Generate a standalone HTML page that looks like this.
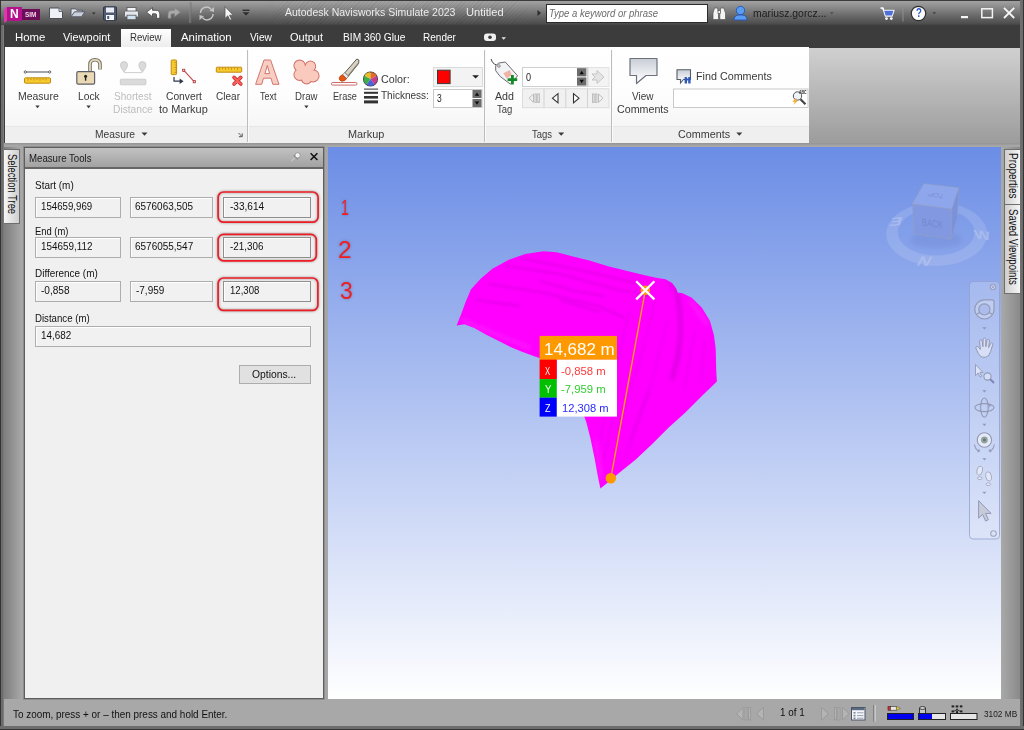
<!DOCTYPE html>
<html lang="en">
<head>
<meta charset="utf-8">
<title>Autodesk Navisworks Simulate 2023 - Untitled</title>
<style>
*{box-sizing:border-box;margin:0;padding:0}
html,body{width:1024px;height:730px;overflow:hidden}
body{position:relative;background:#a6a6a6;font-family:"Liberation Sans","DejaVu Sans",sans-serif;font-size:11px;color:#222}
.abs{position:absolute}
svg{position:absolute;overflow:visible}
.t{position:absolute;white-space:nowrap;transform-origin:0 0;display:block}
/* window frame */
#frameL{left:0;top:25px;width:4px;height:705px;background:linear-gradient(90deg,#343434 0,#343434 1px,#6c6c6c 1px,#6c6c6c 3px,#8a8a8a 4px)}
#frameT{left:0;top:0;width:1px;height:25px;background:#343434}
#frameR{left:1020px;top:0;width:4px;height:730px;background:linear-gradient(90deg,#707070 0,#6c6c6c 2.600px,#343434 2.600px,#343434 100%)}
#frameB{left:0;top:726px;width:1024px;height:4px;background:linear-gradient(180deg,#6e6e6e 0,#6c6c6c 2.600px,#343434 2.600px,#343434 100%)}
/* title bar */
#title{left:0;top:0;width:1024px;height:25px;background:linear-gradient(180deg,#3c3c3c 0,#3c3c3c 1px,#a2a2a2 1px,#8c8c8c 7px,#6c6c6c 15px,#505050 23px,#444 25px)}
#hatch{left:258px;top:1px;width:284px;height:23px;background:repeating-linear-gradient(135deg,rgba(0,0,0,.045) 0,rgba(0,0,0,.045) 1px,rgba(255,255,255,.02) 1px,rgba(255,255,255,.02) 3px);-webkit-mask-image:linear-gradient(90deg,transparent,#000 12%,#000 88%,transparent);mask-image:linear-gradient(90deg,transparent,#000 12%,#000 88%,transparent)}
#tabs{left:4px;top:25px;width:1016px;height:23px;background:#3c3c3c}
#tabsel{left:121px;top:29px;width:50px;height:19px;background:linear-gradient(180deg,#fdfdfd,#ececec);border-top:1px solid #fff}
/* ribbon */
#ribbon{left:5px;top:47px;width:804px;height:79px;background:linear-gradient(180deg,#ffffff 0,#fdfdfd 60%,#f6f6f6 100%)}
#ribbonL{left:5px;top:126px;width:804px;height:17px;background:#efefef;border-top:1px solid #e6e6e6}
#ribbonR{left:809px;top:48px;width:211px;height:95px;background:linear-gradient(180deg,#d0d0d0,#9c9c9c)}
#ribbonE{left:4px;top:47px;width:1px;height:96px;background:#3c3c3c}
#ribbonU{left:5px;top:143px;width:1015px;height:2px;background:linear-gradient(180deg,#949494,#a0a0a0)}
.sep{position:absolute;top:50px;width:2px;height:92px;background:linear-gradient(90deg,#bdbdbd 0,#bdbdbd 1px,#fafafa 1px)}
.dd{position:absolute;width:0;height:0;border-left:2px solid transparent;border-right:2px solid transparent;border-top:2.5px solid #444}
.ddp{position:absolute;width:0;height:0;border-left:3px solid transparent;border-right:3px solid transparent;border-top:3.5px solid #444}
/* docking */
#dockL{left:4px;top:147px;width:18px;height:552px;background:linear-gradient(90deg,#7e7e7e,#a9a9a9)}
#dockR{left:1001px;top:147px;width:19px;height:552px;background:linear-gradient(90deg,#a9a9a9,#8a8a8a)}
.vtab{position:absolute;border:1px solid #6e6e6e;background:linear-gradient(90deg,#f6f6f6,#cfcfcf)}
.vtxt{position:absolute;white-space:nowrap;transform-origin:0 0;transform:rotate(90deg);font-size:11px;line-height:12px;color:#111}
/* measure tools panel */
#mt{left:24px;top:147px;width:300px;height:552px;background:#f0f0f0;border:1px solid #5e5e5e;box-shadow:0 0 0 1px #8e8e8e}
#mtTitle{left:0;top:0;width:298px;height:21px;background:linear-gradient(180deg,#c2c2c2,#a2a2a2);border-bottom:2px solid #666}
.fld{position:absolute;border:1px solid #adadad;background:#f1f1f1;box-shadow:inset 1px 1px 0 #fff}
.hl{position:absolute;border:2px solid #f01820;border-radius:6px;box-shadow:0 0 3px 1px rgba(90,90,90,.55),inset 0 0 3px 1px rgba(90,90,90,.45)}
.btn{position:absolute;border:1px solid #adadad;background:#e1e1e1}
/* viewport */
#view{left:328px;top:147px;width:673px;height:552px;overflow:hidden;background:linear-gradient(180deg,#6b8de5 0%,#ffffff 100%)}
#status{left:4px;top:699px;width:1016px;height:27px;background:#a8a8a8}
</style>
</head>
<body>
<div id="title" class="abs"></div>
<div id="hatch" class="abs"></div>
<div id="tabs" class="abs"></div>
<div id="tabsel" class="abs"></div>
<div id="ribbon" class="abs"></div>
<div id="ribbonL" class="abs"></div>
<div id="ribbonR" class="abs"></div>
<div id="ribbonU" class="abs"></div>
<div id="ribbonE" class="abs"></div>
<div id="dockL" class="abs"></div>
<div id="dockR" class="abs"></div>
<div id="status" class="abs"></div>
<!-- ===== title bar ===== -->
<svg style="left:0;top:0" width="1024" height="48" viewBox="0 0 1024 48">
  <!-- app logo -->
  <polygon points="4,9 7,7 7,21 4,23" fill="#d63ba8"/>
  <rect x="7" y="7" width="15" height="14" fill="#b3128c"/>
  <rect x="22" y="9" width="18" height="11" fill="#6d0c58"/>
  <!-- new -->
  <path d="M49.5 8 H59 L62.5 11.5 V18.5 H49.5 Z" fill="#eef1f6" stroke="#4b4f58" stroke-width="1"/>
  <path d="M59 8 V11.5 H62.5" fill="#cfd5e0" stroke="#4b4f58" stroke-width=".8"/>
  <!-- open -->
  <path d="M71 16.8 V8.8 H75.5 L76.8 10.2 H82.5 V12" fill="#dfe4ec" stroke="#555b66" stroke-width="1"/>
  <path d="M71 16.8 L74.5 11.8 H85 L81.5 16.8 Z" fill="#c9d0dc" stroke="#555b66" stroke-width="1"/>
  <polygon points="92,12.5 95.6,12.5 93.8,14.6" fill="#2e2e2e"/>
  <!-- save -->
  <rect x="103.5" y="6.8" width="13" height="13.4" rx="1" fill="#4d5a72" stroke="#2e3646" stroke-width="1"/>
  <rect x="106" y="7.5" width="8" height="5" fill="#e9edf3"/>
  <rect x="106" y="15" width="8" height="5" fill="#f4f6fa"/>
  <rect x="107.2" y="16" width="2" height="3" fill="#4d5a72"/>
  <!-- print -->
  <rect x="127" y="7.5" width="9" height="4" fill="#f4f6fa" stroke="#555" stroke-width=".8"/>
  <rect x="124.5" y="11" width="14" height="6" rx="1" fill="#e4e8ee" stroke="#555" stroke-width=".8"/>
  <rect x="127" y="15.2" width="9" height="4.5" fill="#cfe0ee" stroke="#555" stroke-width=".8"/>
  <!-- undo -->
  <path d="M146.5 12.2 L152.5 7.5 V10.3 H156 Q159.8 10.3 159.8 14.5 V18.3 H156.5 V14.8 Q156.5 13.8 155.4 13.8 H152.5 V16.8 Z" fill="#fafafa" stroke="#444" stroke-width=".8"/>
  <!-- redo (disabled) -->
  <path d="M180.5 12.2 L174.5 7.5 V10.3 H171.5 Q168 10.3 168 14.5 V18.3 H171 V14.8 Q171 13.8 172.1 13.8 H174.5 V16.8 Z" fill="#a9a9a9" stroke="#7c7c7c" stroke-width=".6"/>
  <rect x="189.5" y="2" width="1" height="21" fill="#8a8a8a"/>
  <rect x="190.5" y="2" width="1" height="21" fill="#6a6a6a" opacity=".6"/>
  <!-- refresh -->
  <path d="M200.5 13 A6 6 0 0 1 211 9.2" fill="none" stroke="#c4c4c4" stroke-width="1.500"/>
  <path d="M213 14 A6 6 0 0 1 202.5 17.8" fill="none" stroke="#c4c4c4" stroke-width="1.500"/>
  <polygon points="209.500,10.800 214,7 214,12" fill="#c4c4c4"/>
  <polygon points="204,16.200 199.500,20 199.500,15" fill="#c4c4c4"/>
  <!-- select cursor -->
  <path d="M225 6.5 V18.5 L227.8 15.8 L229.8 20.3 L231.6 19.5 L229.6 15.2 H233.3 Z" fill="#f4f4f4" stroke="#555" stroke-width=".8"/>
  <!-- customize -->
  <rect x="242.5" y="9.6" width="7" height="1.3" fill="#2d2d2d"/>
  <polygon points="242.5,12.2 249.5,12.2 246,15.6" fill="#2d2d2d"/>
  <!-- search arrow + box -->
  <polygon points="537.5,10 541,13 537.5,16" fill="#2d2d2d"/>
  <rect x="546.5" y="4.5" width="161" height="18" fill="#fff" stroke="#2b2b2b" stroke-width="1"/>
  <!-- binoculars -->
  <g fill="#f4f4f4" stroke="#555" stroke-width=".7">
    <path d="M713 19.5 V13 L714.5 8 H717.5 L718.5 12 V19.5 Z"/>
    <path d="M719.8 19.5 V12 L720.8 8 H723.8 L725.5 13 V19.5 Z"/>
    <rect x="718" y="10.5" width="2.5" height="3"/>
  </g>
  <!-- user -->
  <circle cx="740.5" cy="10.5" r="4.2" fill="#5b9bf0" stroke="#1f56b8" stroke-width=".9"/>
  <path d="M734 20 Q734 15.5 738.5 15 H742.5 Q747 15.5 747 20 Z" fill="#5b9bf0" stroke="#1f56b8" stroke-width=".9"/>
  <polygon points="830,12.2 833.6,12.2 831.8,14.2" fill="#4a4a4a"/>
  <!-- cart -->
  <path d="M880.5 8 H883 L885.5 16 H892 L893.8 10.5 H884" fill="#e8eefc" stroke="#f8f8ff" stroke-width="1.5" stroke-linejoin="round"/>
  <path d="M884.2 10.8 H893.4 L892 15.5 H885.6 Z" fill="#4f6fd8"/>
  <circle cx="886.5" cy="18.6" r="1.4" fill="#f8f8ff"/><circle cx="891.3" cy="18.6" r="1.4" fill="#f8f8ff"/>
  <rect x="902.5" y="6.5" width="1" height="15" fill="#8e8e8e"/>
  <!-- help -->
  <circle cx="918.5" cy="13.5" r="7.2" fill="#fbfbfb" stroke="#2d2d2d" stroke-width="1.2"/>
  <polygon points="932.6,12.2 936,12.2 934.3,14.2" fill="#3c3c3c"/>
  <!-- window controls -->
  <rect x="961" y="16" width="7" height="2.2" fill="#f4f4f4"/>
  <rect x="981.8" y="8.8" width="10.6" height="8.8" fill="none" stroke="#f4f4f4" stroke-width="1.5"/>
  <path d="M1004 7.8 L1014.2 18 M1014.2 7.8 L1004 18" stroke="#f6f6f6" stroke-width="1.8"/>
  <!-- tab row camera icon -->
  <rect x="484" y="33.5" width="12" height="7.5" rx="3" fill="#f0f0f0"/>
  <circle cx="490" cy="37.3" r="1.8" fill="#3c3c3c"/>
  <polygon points="501.5,37.3 506,37.3 503.7,39.8" fill="#e8e8e8"/>
</svg>
<span class="t" style="left:10.00px;top:6.30px;font-size:12.71px;line-height:16px;transform:scaleX(0.9444);color:#fff;font-weight:bold">N</span>
<span class="t" style="left:25.00px;top:10.50px;font-size:6.57px;line-height:8px;transform:scaleX(0.9754);color:#f3d6ea;font-weight:bold">SIM</span>
<span class="t" style="left:284.50px;top:4.85px;font-size:11.59px;line-height:14px;transform:scaleX(0.9068);color:#ececec">Autodesk Navisworks Simulate 2023</span>
<span class="t" style="left:465.75px;top:4.85px;font-size:11.59px;line-height:14px;transform:scaleX(0.9596);color:#ececec">Untitled</span>
<span class="t" style="left:549.00px;top:5.60px;font-size:10.87px;line-height:14px;transform:scaleX(0.8741);color:#6a6a6a;font-style:italic">Type a keyword or phrase</span>
<span class="t" style="left:753.00px;top:5.80px;font-size:10.93px;line-height:14px;transform:scaleX(0.9527);color:#1c1c1c">mariusz.gorcz...</span>
<span class="t" style="left:915.80px;top:6.10px;font-size:12.00px;line-height:15px;transform:scaleX(0.8000);color:#2a55d0;font-weight:bold">?</span>
<!-- tabs -->
<span class="t" style="left:15.25px;top:30.40px;font-size:11.59px;line-height:14px;transform:scaleX(0.9854);color:#fff">Home</span>
<span class="t" style="left:62.90px;top:30.40px;font-size:11.59px;line-height:14px;transform:scaleX(0.9473);color:#fff">Viewpoint</span>
<span class="t" style="left:129.90px;top:30.40px;font-size:11.59px;line-height:14px;transform:scaleX(0.8316);color:#333">Review</span>
<span class="t" style="left:180.50px;top:30.40px;font-size:11.59px;line-height:14px;transform:scaleX(0.9844);color:#fff">Animation</span>
<span class="t" style="left:249.50px;top:30.40px;font-size:11.59px;line-height:14px;transform:scaleX(0.8815);color:#fff">View</span>
<span class="t" style="left:290.00px;top:30.40px;font-size:11.59px;line-height:14px;transform:scaleX(0.9496);color:#fff">Output</span>
<span class="t" style="left:342.50px;top:30.40px;font-size:11.59px;line-height:14px;transform:scaleX(0.8813);color:#fff">BIM 360 Glue</span>
<span class="t" style="left:422.50px;top:30.40px;font-size:11.59px;line-height:14px;transform:scaleX(0.8657);color:#fff">Render</span>
<!-- ===== ribbon ===== -->
<div class="sep" style="left:247px"></div>
<div class="sep" style="left:484px"></div>
<div class="sep" style="left:611px"></div>
<svg style="left:0;top:0" width="1024" height="146" viewBox="0 0 1024 146">
  <defs><linearGradient id="gBub" x1="0" y1="0" x2="0" y2="1"><stop offset="0" stop-color="#c9ced6"/><stop offset=".75" stop-color="#f4f5f8"/><stop offset="1" stop-color="#ffffff"/></linearGradient></defs>
  <!-- Measure icon -->
  <line x1="25.5" y1="72" x2="49.5" y2="72" stroke="#4a4f57" stroke-width="1"/>
  <circle cx="25.300" cy="72" r="1.150" fill="#fff" stroke="#3f444c" stroke-width=".8"/>
  <circle cx="49.700" cy="72" r="1.150" fill="#fff" stroke="#3f444c" stroke-width=".8"/>
  <rect x="24.5" y="77.8" width="26" height="5.4" rx="1" fill="#f6c92e" stroke="#c08a12" stroke-width="1"/>
  <path d="M28 78.5v2 M31 78.5v1.5 M34 78.5v2 M37 78.5v1.5 M40 78.5v2 M43 78.5v1.5 M46 78.5v2" stroke="#b07c10" stroke-width=".7"/>
  <!-- Lock icon -->
  <path d="M90 71.5 V64.5 Q90 59.8 95 59.8 Q100 59.8 100 64.5 V69.5" fill="none" stroke="#6d6f72" stroke-width="3.6"/>
  <path d="M90 71.5 V64.5 Q90 59.8 95 59.8 Q100 59.8 100 64.5 V69.5" fill="none" stroke="#e9d7ae" stroke-width="1.8"/>
  <rect x="76.8" y="71.6" width="17.8" height="12.6" rx="1.4" fill="#ead9b4" stroke="#5d6066" stroke-width="1.2"/>
  <circle cx="85.6" cy="76.3" r="1.5" fill="#222"/><rect x="84.9" y="76.5" width="1.4" height="4.2" fill="#222"/>
  <!-- Shortest distance (disabled) -->
  <g fill="#dadada" stroke="#c6c6c6" stroke-width=".8">
    <path d="M124 61.5 a3.6 3.6 0 0 1 3.6 3.6 q0 2.5 -3.6 7 q-3.6 -4.5 -3.6 -7 a3.6 3.6 0 0 1 3.6 -3.6z"/>
    <path d="M142.4 61.5 a3.6 3.6 0 0 1 3.6 3.6 q0 2.5 -3.6 7 q-3.6 -4.5 -3.6 -7 a3.6 3.6 0 0 1 3.6 -3.6z"/>
    <rect x="120.3" y="79.2" width="25.6" height="5.6" rx=".8"/>
  </g>
  <line x1="124" y1="72.6" x2="142.4" y2="72.6" stroke="#cfcfcf" stroke-width="1"/>
  <!-- Convert to markup -->
  <rect x="171.2" y="60" width="5.4" height="14.6" rx=".8" fill="#f6c92e" stroke="#c08a12" stroke-width="1"/>
  <path d="M174.4 62.5h2 M175 65h1.4 M174.4 67.5h2 M175 70h1.4 M174.4 72.4h2" stroke="#b07c10" stroke-width=".7"/>
  <path d="M174 77 V81.2 H180.5" fill="none" stroke="#2e3a4a" stroke-width="1.2"/>
  <polygon points="179.6,78.4 183.6,81.2 179.6,84" fill="#2e3a4a"/>
  <line x1="183.6" y1="70.2" x2="194.2" y2="81.6" stroke="#c0474a" stroke-width="1.1"/>
  <rect x="182.600" y="69.200" width="2.200" height="2.200" fill="#f2b8b8" stroke="#b03a3e" stroke-width=".8"/>
  <rect x="193.200" y="80.600" width="2.200" height="2.200" fill="#f2b8b8" stroke="#b03a3e" stroke-width=".8"/>
  <!-- Clear -->
  <rect x="216.3" y="67.2" width="25.4" height="5" rx=".8" fill="#f6c92e" stroke="#c08a12" stroke-width="1"/>
  <path d="M219.5 67.8v2 M222.5 67.8v1.5 M225.5 67.8v2 M228.5 67.8v1.5 M231.5 67.8v2 M234.5 67.8v1.5 M237.5 67.8v2" stroke="#b07c10" stroke-width=".7"/>
  <path d="M234 77.4 L240.8 84 M240.8 77.4 L234 84" stroke="#cf3030" stroke-width="3.600" stroke-linecap="round"/>
  <path d="M234 77.4 L240.8 84 M240.8 77.4 L234 84" stroke="#f8625c" stroke-width="1.900" stroke-linecap="round"/>
  <!-- Text A -->
  <path d="M255.600 84.300 L264 60 H270.600 L279 84.300 H272.800 L271 78.200 H263.500 L261.700 84.300 Z M264.900 73.600 H269.600 L267.300 65.500 Z" fill="#f8cdc3" stroke="#d0766c" stroke-width="1" stroke-linejoin="round" fill-rule="evenodd"/>
  <!-- Draw cloud -->
  <g fill="#f9cabd" stroke="#cf6f66" stroke-width="2"><circle cx="299.600" cy="65.600" r="5.200"/><circle cx="310.400" cy="66.300" r="4.800"/><circle cx="313" cy="75.800" r="5.600"/><circle cx="306.600" cy="78.600" r="4.800"/><circle cx="299.700" cy="74.600" r="5.300"/></g>
  <g fill="#f9cabd"><circle cx="299.600" cy="65.600" r="5.200"/><circle cx="310.400" cy="66.300" r="4.800"/><circle cx="313" cy="75.800" r="5.600"/><circle cx="306.600" cy="78.600" r="4.800"/><circle cx="299.700" cy="74.600" r="5.300"/><circle cx="305.500" cy="71" r="5"/></g>
  <!-- Erase brush -->
  <path d="M344.800 72.800 L356.800 59 L358.900 60 L358.600 63.500 L348.400 76.200 Z" fill="#d8d2c4" stroke="#4e493f" stroke-width=".9" stroke-linejoin="round"/>
  <path d="M347.600 75.400 L358.600 62 L358.600 63.500 L348.400 76.200 Z" fill="#8a8272"/>
  <path d="M342.400 74.800 L344.800 72.600 L348.500 76.200 L346.500 78.600 Z" fill="#e6e6e6" stroke="#6a6a6a" stroke-width=".7"/>
  <path d="M342.300 74.800 L346.600 78.700 Q344.500 81.600 341.500 81.200 Q338.600 80.200 339.300 77.600 Q340.300 75.600 342.300 74.800 Z" fill="#e9550c" stroke="#a63a08" stroke-width=".7"/>
  <rect x="331.400" y="82.500" width="25.600" height="2.600" rx="1.300" fill="#fff" stroke="#c85a5a" stroke-width=".9"/>
  <!-- color wheel -->
  <circle cx="370.5" cy="79" r="6.800" fill="#e8e8e8" stroke="#3c3c3c" stroke-width="1.500"/>
  <path d="M370.500 79 L364.500 76 A6.200 6.200 0 0 1 370.500 72.300 Z" fill="#e5c02a"/>
  <path d="M370.500 79 L370.500 72.300 A6.200 6.200 0 0 1 376.500 76 Z" fill="#e36a2a"/>
  <path d="M370.500 79 L376.500 76 A6.200 6.200 0 0 1 374.500 84.400 Z" fill="#c63b8e"/>
  <path d="M370.500 79 L374.500 84.400 A6.200 6.200 0 0 1 366.500 84.400 Z" fill="#4a62d8"/>
  <path d="M370.500 79 L366.500 84.400 A6.200 6.200 0 0 1 364.500 76 Z" fill="#3fae4a"/>
  <!-- thickness lines -->
  <rect x="364" y="88.600" width="14" height="1" fill="#333"/>
  <rect x="364" y="91.800" width="14" height="2" fill="#333"/>
  <rect x="364" y="96" width="14" height="2.600" fill="#333"/>
  <rect x="364" y="100.400" width="14" height="3" fill="#333"/>
  <!-- colour dropdown -->
  <rect x="433.500" y="67.500" width="49" height="19" fill="#f3f3f3" stroke="#dadada" stroke-width="1"/>
  <rect x="437.500" y="70.200" width="12.600" height="13.400" fill="#ff0000" stroke="#3a3a3a" stroke-width="1"/>
  <polygon points="472.200,75.200 479,75.200 475.600,78.600" fill="#222"/>
  <!-- thickness spinner -->
  <rect x="433.500" y="89.500" width="48.500" height="18" fill="#fff" stroke="#c9c9c9" stroke-width="1"/>
  <rect x="472.500" y="90" width="9" height="8" fill="#6c6c6c"/><rect x="472.500" y="99" width="9" height="8" fill="#6c6c6c"/>
  <polygon points="474.800,95.800 479.200,95.800 477,92.400" fill="#0a0a0a"/>
  <polygon points="474.800,101.400 479.200,101.400 477,104.800" fill="#0a0a0a"/>
  <!-- Add tag -->
  <path d="M491.200 59 q0.800 4.500 5.600 6.200" fill="none" stroke="#444" stroke-width="1"/>
  <path d="M495.700 65.600 L498.900 63 L505.300 62 L517.600 75.800 L510.500 84.200 L500.200 76.500 L495.700 70.700 Z" fill="#f2f3f5" stroke="#6a6d72" stroke-width="1" stroke-linejoin="round"/>
  <path d="M503.400 73.300 L509.800 70 L511.800 75.200 L506.600 78.400 Z" fill="#f2b3a6"/>
  <circle cx="498.900" cy="66" r="1.300" fill="#fff" stroke="#555" stroke-width=".7"/>
  <path d="M512.400 74.900 V84.500 M507.600 79.700 H517.200" stroke="#128a25" stroke-width="2.800"/>
  <!-- tag id spinner -->
  <rect x="522.500" y="67.500" width="65" height="19" fill="#fff" stroke="#cfcfcf" stroke-width="1"/>
  <rect x="577" y="68.200" width="9.400" height="8.200" fill="#6c6c6c"/><rect x="577" y="77.400" width="9.400" height="8.200" fill="#6c6c6c"/>
  <polygon points="579.500,74.200 583.900,74.200 581.700,70.800" fill="#0a0a0a"/>
  <polygon points="579.500,79.800 583.900,79.800 581.700,83.200" fill="#0a0a0a"/>
  <rect x="588.500" y="67.500" width="20.500" height="19" fill="#f3f3f3" stroke="#e2e2e2" stroke-width="1"/>
  <path d="M592 74 h5 v-3.500 l7 6.500 l-7 6.500 v-3.500 h-5 l3 -3 z" fill="#e4e4e4" stroke="#bdbdbd" stroke-width=".8"/>
  <!-- tag nav buttons -->
  <rect x="522.500" y="88.700" width="86.500" height="19" fill="#f1f1f1" stroke="#dcdcdc" stroke-width="1"/>
  <path d="M544 88.700 v19 M565.800 88.700 v19 M587.500 88.700 v19" stroke="#d2d2d2" stroke-width="1"/>
  <g fill="none" stroke="#bdbdbd" stroke-width="1"><path d="M533.500 94 L529 98.200 L533.500 102.400 Z"/><rect x="535" y="94" width="1.600" height="8.400"/><rect x="537.800" y="94" width="1.600" height="8.400"/></g>
  <path d="M558 93.600 L552.500 98.200 L558 102.800 Z" fill="#fff" stroke="#333" stroke-width="1.100"/>
  <path d="M573.500 93.600 L579 98.200 L573.500 102.800 Z" fill="#fff" stroke="#333" stroke-width="1.100"/>
  <g fill="none" stroke="#bdbdbd" stroke-width="1"><path d="M598.500 94 L603 98.200 L598.500 102.400 Z"/><rect x="592.500" y="94" width="1.600" height="8.400"/><rect x="595.300" y="94" width="1.600" height="8.400"/></g>
  <!-- View comments bubble -->
  <path d="M630 58.500 H657 V75.500 H646 L636.500 83.500 V75.500 H630 Z" fill="url(#gBub)" stroke="#6c727c" stroke-width="1.200" stroke-linejoin="round"/>
  <!-- Find comments icon -->
  <path d="M677 69.800 H690.500 V79.500 H683.500 L680.500 83 V79.500 H677 Z" fill="url(#gBub)" stroke="#555c68" stroke-width="1.100"/>
  <g fill="#2f59b8"><rect x="684.600" y="77" width="2.400" height="6.500" rx=".6"/><rect x="688.200" y="77" width="2.400" height="6.500" rx=".6"/><rect x="686.400" y="78.500" width="2.400" height="2"/></g>
  <!-- search comments box -->
  <rect x="673.500" y="89" width="134.500" height="18.500" fill="#fff" stroke="#c9c9c9" stroke-width="1"/>
  <circle cx="797.500" cy="96" r="4.200" fill="#eef3fa" stroke="#555" stroke-width="1"/>
  <line x1="800.500" y1="99.200" x2="805.500" y2="104.200" stroke="#444" stroke-width="2.200"/>
  <path d="M795.500 98.500 l-3.200 3.300 h2.600 l-1.600 3.200 l4.400 -4.300 h-2.600 l2 -2.200z" fill="#f1a91a"/>
  <!-- launcher arrow -->
  <path d="M238.500 133 L241.800 136.300 M242.200 133.400 V136.700 H238.900" fill="none" stroke="#555" stroke-width="1"/>
  <!-- dropdown arrows -->
  <g fill="#3a3a3a"><polygon points="35.300,105.500 39.700,105.500 37.500,108.200"/><polygon points="86.400,105.500 90.800,105.500 88.600,108.200"/><polygon points="304.200,105.500 308.600,105.500 306.400,108.200"/>
  <polygon points="141.500,132.500 147.500,132.500 144.500,135.700"/><polygon points="558.200,132.500 564.200,132.500 561.200,135.700"/><polygon points="736.300,132.500 742.300,132.500 739.300,135.700"/></g>
</svg>
<span class="t" style="left:17.50px;top:88.85px;font-size:11.23px;line-height:14px;transform:scaleX(0.9330);color:#3a3a3a">Measure</span>
<span class="t" style="left:78.00px;top:88.85px;font-size:11.23px;line-height:14px;transform:scaleX(0.9133);color:#3a3a3a">Lock</span>
<span class="t" style="left:113.75px;top:88.85px;font-size:11.23px;line-height:14px;transform:scaleX(0.8966);color:#bdbdbd">Shortest</span>
<span class="t" style="left:113.25px;top:101.85px;font-size:10.87px;line-height:14px;transform:scaleX(0.9417);color:#bdbdbd">Distance</span>
<span class="t" style="left:165.75px;top:88.85px;font-size:11.23px;line-height:14px;transform:scaleX(0.9150);color:#3a3a3a">Convert</span>
<span class="t" style="left:159.25px;top:101.85px;font-size:10.87px;line-height:14px;transform:scaleX(1.0105);color:#3a3a3a">to Markup</span>
<span class="t" style="left:215.75px;top:88.85px;font-size:11.23px;line-height:14px;transform:scaleX(0.8957);color:#3a3a3a">Clear</span>
<span class="t" style="left:259.50px;top:88.85px;font-size:11.23px;line-height:14px;transform:scaleX(0.8039);color:#3a3a3a">Text</span>
<span class="t" style="left:295.00px;top:88.85px;font-size:11.23px;line-height:14px;transform:scaleX(0.8587);color:#3a3a3a">Draw</span>
<span class="t" style="left:333.25px;top:88.85px;font-size:11.23px;line-height:14px;transform:scaleX(0.8171);color:#3a3a3a">Erase</span>
<span class="t" style="left:381.00px;top:71.60px;font-size:11.30px;line-height:14px;transform:scaleX(0.9501);color:#3a3a3a">Color:</span>
<span class="t" style="left:381.00px;top:87.85px;font-size:11.38px;line-height:14px;transform:scaleX(0.8809);color:#3a3a3a">Thickness:</span>
<span class="t" style="left:437.30px;top:91.10px;font-size:10.87px;line-height:14px;transform:scaleX(0.7833);color:#222">3</span>
<span class="t" style="left:495.00px;top:88.85px;font-size:11.23px;line-height:14px;transform:scaleX(0.9507);color:#3a3a3a">Add</span>
<span class="t" style="left:496.75px;top:101.85px;font-size:10.87px;line-height:14px;transform:scaleX(0.8730);color:#3a3a3a">Tag</span>
<span class="t" style="left:526.25px;top:69.85px;font-size:10.87px;line-height:14px;transform:scaleX(0.8333);color:#222">0</span>
<span class="t" style="left:632.00px;top:88.85px;font-size:11.23px;line-height:14px;transform:scaleX(0.8896);color:#3a3a3a">View</span>
<span class="t" style="left:617.00px;top:101.85px;font-size:10.87px;line-height:14px;transform:scaleX(0.9846);color:#3a3a3a">Comments</span>
<span class="t" style="left:695.75px;top:68.85px;font-size:11.23px;line-height:14px;transform:scaleX(0.9583);color:#3a3a3a">Find Comments</span>
<span class="t" style="left:798.60px;top:90.10px;font-size:4.57px;line-height:6px;transform:scaleX(0.7743);color:#222;font-weight:bold">ABC</span>
<span class="t" style="left:95.00px;top:127.10px;font-size:10.87px;line-height:14px;transform:scaleX(0.9476);color:#3a3a3a">Measure</span>
<span class="t" style="left:348.00px;top:127.10px;font-size:10.87px;line-height:14px;transform:scaleX(1.0022);color:#3a3a3a">Markup</span>
<span class="t" style="left:532.00px;top:127.10px;font-size:10.87px;line-height:14px;transform:scaleX(0.8721);color:#3a3a3a">Tags</span>
<span class="t" style="left:678.00px;top:127.10px;font-size:10.87px;line-height:14px;transform:scaleX(0.9940);color:#3a3a3a">Comments</span>
<!-- ===== left dock tab ===== -->
<div class="vtab" style="left:4px;top:149px;width:16px;height:75px;border-left:none"></div>
<span class="t" style="left:19.40px;top:154.30px;font-size:12.03px;line-height:15px;transform:rotate(90deg) scaleX(0.7822);color:#111">Selection Tree</span>
<!-- ===== Measure Tools panel ===== -->
<div id="mt" class="abs"><div id="mtTitle" class="abs"></div></div>
<svg style="left:0;top:0" width="330" height="400" viewBox="0 0 330 400">
  <!-- pin -->
  <line x1="291.200" y1="161.300" x2="294.600" y2="157.800" stroke="#d6d6d6" stroke-width="1"/>
  <path d="M293.800 155.200 L297.800 159.200" stroke="#8a8a8a" stroke-width="1.600"/>
  <circle cx="297.600" cy="155.300" r="2.600" fill="#f4f4f4" stroke="#8c8c8c" stroke-width=".8"/>
  <!-- close -->
  <path d="M310.600 153.200 L317.400 160 M317.400 153.200 L310.600 160" stroke="#111" stroke-width="1.500"/>
</svg>
<span class="t" style="left:29.00px;top:151.60px;font-size:10.58px;line-height:13px;transform:scaleX(0.9110);color:#1a1a1a">Measure Tools</span>
<span class="t" style="left:34.80px;top:178.70px;font-size:10.72px;line-height:13px;transform:scaleX(0.9292);color:#111">Start (m)</span>
<span class="t" style="left:34.80px;top:224.20px;font-size:10.87px;line-height:14px;transform:scaleX(0.8658);color:#111">End (m)</span>
<span class="t" style="left:34.60px;top:267.00px;font-size:10.72px;line-height:13px;transform:scaleX(0.9265);color:#111">Difference (m)</span>
<span class="t" style="left:34.60px;top:310.80px;font-size:10.87px;line-height:14px;transform:scaleX(0.8887);color:#111">Distance (m)</span>
<div class="fld" style="left:35px;top:197px;width:86px;height:21px"></div>
<div class="fld" style="left:130px;top:197px;width:83px;height:21px"></div>
<div class="fld" style="left:35px;top:237px;width:86px;height:21px"></div>
<div class="fld" style="left:130px;top:237px;width:83px;height:21px"></div>
<div class="fld" style="left:35px;top:280.500px;width:86px;height:21px"></div>
<div class="fld" style="left:130px;top:280.500px;width:83px;height:21px"></div>
<div class="fld" style="left:35px;top:326px;width:276px;height:21px"></div>
<svg style="left:0;top:0" width="330" height="320" viewBox="0 0 330 320">
  <defs><filter id="fH" x="-10%" y="-20%" width="120%" height="140%"><feGaussianBlur stdDeviation="1.300"/></filter></defs>
  <g fill="none" stroke="#6e6e6e" stroke-width="2.600" opacity=".5" filter="url(#fH)">
    <rect x="218.100" y="192" width="100" height="30.200" rx="5.500"/><rect x="218.100" y="234.400" width="98.200" height="26.400" rx="5.500"/><rect x="218.100" y="278" width="99.800" height="32.400" rx="5.500"/>
  </g>
  <g fill="none" stroke="#ee1c24" stroke-width="1.700">
    <rect x="218.100" y="192" width="100" height="30.200" rx="5.500"/><rect x="218.100" y="234.400" width="98.200" height="26.400" rx="5.500"/><rect x="218.100" y="278" width="99.800" height="32.400" rx="5.500"/>
  </g>
</svg>
<div class="fld" style="left:223.200px;top:197px;width:88px;height:21px;border-color:#8e8e8e"></div>
<div class="fld" style="left:223.200px;top:237px;width:88px;height:21px;border-color:#8e8e8e"></div>
<div class="fld" style="left:223.200px;top:280.500px;width:88px;height:21px;border-color:#8e8e8e"></div>
<span class="t" style="left:41.00px;top:199.50px;font-size:10.58px;line-height:13px;transform:scaleX(0.9160);color:#111">154659,969</span>
<span class="t" style="left:134.60px;top:199.50px;font-size:10.58px;line-height:13px;transform:scaleX(0.9396);color:#111">6576063,505</span>
<span class="t" style="left:229.60px;top:199.50px;font-size:10.58px;line-height:13px;transform:scaleX(0.9488);color:#111">-33,614</span>
<span class="t" style="left:41.00px;top:240.30px;font-size:10.43px;line-height:13px;transform:scaleX(0.9470);color:#111">154659,112</span>
<span class="t" style="left:134.60px;top:240.30px;font-size:10.43px;line-height:13px;transform:scaleX(0.9564);color:#111">6576055,547</span>
<span class="t" style="left:229.60px;top:240.30px;font-size:10.43px;line-height:13px;transform:scaleX(0.9451);color:#111">-21,306</span>
<span class="t" style="left:40.50px;top:283.50px;font-size:10.58px;line-height:13px;transform:scaleX(0.9531);color:#111">-0,858</span>
<span class="t" style="left:135.60px;top:283.50px;font-size:10.58px;line-height:13px;transform:scaleX(0.9432);color:#111">-7,959</span>
<span class="t" style="left:230.00px;top:283.50px;font-size:10.58px;line-height:13px;transform:scaleX(0.9085);color:#111">12,308</span>
<span class="t" style="left:41.00px;top:328.60px;font-size:10.58px;line-height:13px;transform:scaleX(0.9362);color:#111">14,682</span>
<div class="btn" style="left:239px;top:364.500px;width:71.500px;height:19px"></div>
<span class="t" style="left:252.25px;top:368.25px;font-size:10.36px;line-height:13px;transform:scaleX(0.9975);color:#111">Options...</span>
<!-- ===== right dock tabs ===== -->
<div class="vtab" style="left:1004px;top:149px;width:17px;height:56px;background:linear-gradient(90deg,#cfcfcf,#f6f6f6)"></div>
<div class="vtab" style="left:1004px;top:204px;width:17px;height:90px;background:linear-gradient(90deg,#cfcfcf,#f6f6f6)"></div>
<span class="t" style="left:1019.70px;top:152.78px;font-size:12.17px;line-height:15px;transform:rotate(90deg) scaleX(0.8210);color:#111">Properties</span>
<span class="t" style="left:1019.70px;top:209.20px;font-size:12.17px;line-height:15px;transform:rotate(90deg) scaleX(0.7868);color:#111">Saved Viewpoints</span>
<!-- ===== 3D viewport ===== -->
<div id="view" class="abs">
<svg style="left:0;top:0" width="673" height="552" viewBox="328 147 673 552">
  <defs>
    <clipPath id="cShape"><path id="pShape" d="M456.600 325.500 L461.200 314 L466.100 300.800 L471 289.300 L480.900 278.600 L492.400 268.800 L508.800 259.700 L525.300 254 L543.400 251.200 L556.500 252.300 L573 256.400 L589.400 260.600 L608 266.300 L629.300 271.400 L645.800 275.500 L657.300 278 L665.500 279.300 L672.100 282.900 L676.200 288.600 L677.800 292.800 L682 293.100 L691.800 297.700 L701.700 307.600 L709.900 320.700 L714 335.500 L715.700 348.700 L716.200 370 L716.900 381.500 L701.600 396.300 L685.100 412.800 L668.700 427.600 L652.200 444 L635.800 459.600 L619.300 472.800 L607.800 482.600 L600.400 488.400 L598 476.900 L594.700 458.800 L590.600 439.100 L586.400 422.600 L584.500 416.900 L570 395 L539.400 358 L533.500 355.900 L522 351.800 L510.500 346.900 L497.300 340.300 L485.800 334.600 L474.300 328 L464.400 324.200 Z"/></clipPath>
    <filter id="fB" x="-10%" y="-10%" width="120%" height="120%"><feGaussianBlur stdDeviation="1.400"/></filter>
    <filter id="fB2" x="-20%" y="-20%" width="140%" height="140%"><feGaussianBlur stdDeviation="2.200"/></filter>
  </defs>
  <!-- tunnel surface -->
  <use href="#pShape" fill="#ff00ff"/>
  <g clip-path="url(#cShape)">
    <g filter="url(#fB)" fill="none" stroke="#a800b4" stroke-width="1.600" opacity=".38">
      <path d="M505 266 L560 274 L615 289 L650 296"/>
      <path d="M520 258 L580 270 L640 284"/>
      <path d="M488 284 L540 292 L598 306 L625 318"/>
      <path d="M540 281 L575 291 L605 296"/>
      <path d="M560 300 L600 312"/>
      <path d="M476 300 L520 306"/>
    </g>
    <g filter="url(#fB2)" fill="none" stroke="#9c00aa" opacity=".5">
      <path d="M677 292 L680 312 L681 332 L678 356 L672 380" stroke-width="3"/>
      <path d="M668 282 L676 292" stroke-width="2"/>
    </g>
    <g filter="url(#fB)" fill="none" stroke="#b400c0" stroke-width="1.400" opacity=".28">
      <path d="M655 300 L640 360 L618 430"/><path d="M668 320 L652 380 L630 440"/>
      <path d="M630 310 L612 380 L600 440"/><path d="M695 330 L684 390"/><path d="M705 340 L700 385"/>
      <path d="M620 380 L604 460"/><path d="M650 390 L626 456"/>
    </g>
    <g filter="url(#fB2)" fill="none" stroke="#ff66ff" stroke-width="2.500" opacity=".35">
      <path d="M462 320 L490 332 L530 348"/><path d="M596 440 L601 480"/><path d="M690 300 L708 325"/>
    </g>
  </g>
  <!-- measurement line -->
  <line x1="645.300" y1="290.300" x2="610.800" y2="478.200" stroke="#ff9a14" stroke-width="1.400"/>
  <circle cx="610.800" cy="478.200" r="5.300" fill="#ff9900"/>
  <circle cx="645.300" cy="290.300" r="4.800" fill="#ff9900"/>
  <path d="M636.200 281.200 L654.400 299.400 M654.400 281.200 L636.200 299.400" stroke="#fff" stroke-width="2.300"/>
  <!-- label -->
  <rect x="539.600" y="335.900" width="77.400" height="24" fill="#ff9900"/>
  <rect x="556.700" y="359.700" width="60.300" height="56.900" fill="#ffffff"/>
  <rect x="539.600" y="359.700" width="17.100" height="19.400" fill="#ff0000"/>
  <rect x="539.600" y="379.100" width="17.100" height="18.600" fill="#00c000"/>
  <rect x="539.600" y="397.700" width="17.100" height="18.900" fill="#0000ff"/>
  <!-- ===== ViewCube ===== -->
  <path d="M886.200 234 A50.400 31.900 0 1 0 987 234 A50.400 31.900 0 1 0 886.200 234 Z M897.800 232.300 A38.400 23.300 0 1 1 974.600 232.300 A38.400 23.300 0 1 1 897.800 232.300 Z" fill="#ffffff" fill-opacity=".13" fill-rule="evenodd"/>
  <ellipse cx="936" cy="240" rx="26" ry="9" fill="#4a5fa8" opacity=".12" filter="url(#fB2)"/>
  <polygon points="923.900,183.700 958.800,187.800 951.900,209 912.200,204" fill="#8ea6ec" stroke="#9aa0b8" stroke-opacity=".8" stroke-width=".8" stroke-dasharray="4 1.500"/>
  <polygon points="912.200,204 951.900,209 951.300,239.200 914.300,233.700" fill="#8299e2" stroke="#9aa0b8" stroke-opacity=".8" stroke-width=".8" stroke-dasharray="4 1.500"/>
  <polygon points="958.800,187.800 951.900,209 951.300,239.200 957.400,218" fill="#7a91dc" stroke="#9aa0b8" stroke-opacity=".8" stroke-width=".8" stroke-dasharray="4 1.500"/>
  <text x="0" y="0" transform="matrix(.98 .13 0 1 921.800 225.600)" font-family="Liberation Sans, sans-serif" font-size="10.400" textLength="21.500" lengthAdjust="spacingAndGlyphs" fill="#6f86c8" fill-opacity=".85">BACK</text>
  <text x="0" y="0" transform="matrix(-.98 -.12 .18 -.62 944.500 194.200)" font-family="Liberation Sans, sans-serif" font-size="9.500" font-style="italic" textLength="16.500" lengthAdjust="spacingAndGlyphs" fill="#788ed0" fill-opacity=".85">TOP</text>
  <text x="0" y="0" transform="matrix(-1.4 .14 -.25 .92 901 225)" font-family="Liberation Sans, sans-serif" font-size="13" font-weight="bold" fill="#b4c2ef" fill-opacity=".7">E</text>
  <text x="0" y="0" transform="matrix(1.3 .16 .25 .98 975.200 238.600)" font-family="Liberation Sans, sans-serif" font-size="13" font-weight="bold" fill="#b4c2ef" fill-opacity=".7">W</text>
  <text x="0" y="0" transform="matrix(1.4 .03 -.55 1.05 915.500 265.800)" font-family="Liberation Sans, sans-serif" font-size="13" font-weight="bold" fill="#b4c2ef" fill-opacity=".7">N</text>
  <!-- ===== navigation bar ===== -->
  <rect x="969.500" y="281.500" width="30" height="257.500" rx="3.500" fill="#ffffff" fill-opacity=".2" stroke="#94a0d0" stroke-opacity=".8" stroke-width="1"/>
  <g fill="#dfe4f4" fill-opacity=".5" stroke="#9aa0bc" stroke-width="1.100" opacity=".9">
    <circle cx="993" cy="287" r="2.800"/><path d="M991.300 285.300 L994.700 288.700 M994.700 285.300 L991.300 288.700" stroke-width=".8"/>
    <circle cx="993.500" cy="533.500" r="2.800"/>
  </g>
  <!-- steering wheel -->
  <g stroke="#9399b4" stroke-width="1.200" fill="#e8ecf8" fill-opacity=".35">
    <path d="M984.400 299.800 H992 Q994 299.800 994 301.800 V309.400 A9.600 9.600 0 1 1 984.400 299.800 Z"/>
    <circle cx="984.400" cy="309.400" r="5.600" fill="#9fb0ea" fill-opacity=".6"/>
    <path d="M979.600 312.400 L976.200 314.600 M989.200 312.400 L992.600 314.600" fill="none"/>
  </g>
  <g fill="#8a8fa8" opacity=".85">
    <polygon points="982.300,327.200 986.500,327.200 984.400,329.400"/>
    <polygon points="982.300,390.200 986.500,390.200 984.400,392.400"/>
    <polygon points="982.300,423.800 986.500,423.800 984.400,426"/>
    <polygon points="982.300,458.200 986.500,458.200 984.400,460.400"/>
    <polygon points="982.300,491.800 986.500,491.800 984.400,494"/>
  </g>
  <!-- pan hand -->
  <path d="M977 350.500 Q975 347.500 976.200 346.600 Q977.600 345.800 979.300 348 L980.400 349.500 L979.600 341.500 Q979.600 339.800 980.800 339.800 Q982 339.800 982.200 341.500 L982.900 346.800 L983.200 339.600 Q983.300 338 984.500 338 Q985.800 338 985.800 339.600 L985.800 346.800 L987 340.600 Q987.300 339.200 988.400 339.400 Q989.600 339.600 989.400 341.200 L988.600 347.600 L990.600 343.600 Q991.200 342.400 992.200 342.900 Q993.200 343.400 992.700 344.800 L990.600 351.500 Q989.600 356.200 985.800 357.200 L982.600 357.200 Q979.800 356.600 978.400 353.500 Z" fill="#eef1fa" fill-opacity=".6" stroke="#9399b4" stroke-width="1"/>
  <!-- zoom window -->
  <path d="M975.500 364.500 V375.500 L978.200 373 L980 377 L981.600 376.300 L979.800 372.400 H983 Z" fill="#eef1fa" fill-opacity=".65" stroke="#9399b4" stroke-width=".9"/>
  <circle cx="987.500" cy="376.500" r="3.600" fill="#eef1fa" fill-opacity=".5" stroke="#9399b4" stroke-width="1.100"/>
  <line x1="990.200" y1="379.200" x2="994" y2="383" stroke="#7f89b4" stroke-width="2"/>
  <!-- orbit -->
  <g fill="none" stroke="#9399b4" stroke-width="1.100">
    <ellipse cx="984.400" cy="407.600" rx="9.600" ry="4"/><ellipse cx="984.400" cy="407.600" rx="3.800" ry="9.600"/>
    <path d="M988 404 l2.600 1.200 l-2 2"/>
  </g>
  <!-- look -->
  <circle cx="984.400" cy="440" r="7.200" fill="#f2f4fa" fill-opacity=".7" stroke="#9399b4" stroke-width="1.100"/>
  <circle cx="984.400" cy="440" r="3.400" fill="#8a9c94" fill-opacity=".9"/><circle cx="984.400" cy="440" r="1.400" fill="#5a6a70" fill-opacity=".8"/>
  <path d="M974.600 444.500 q0.400 5 4.600 6.600 l-1.800 0.800 m1.800 -0.800 l-0.400 -2 M994.200 444.500 q-0.400 5 -4.600 6.600 l1.800 0.800 m-1.800 -0.800 l0.400 -2" fill="none" stroke="#9399b4" stroke-width="1.100"/>
  <!-- walk feet -->
  <g fill="#eef1fa" fill-opacity=".6" stroke="#a4a9bf" stroke-width=".9">
    <ellipse cx="979.700" cy="470.600" rx="2.800" ry="4.600" transform="rotate(14 979.700 470.600)"/><ellipse cx="979.800" cy="478.200" rx="2.300" ry="1.400"/>
    <ellipse cx="988.600" cy="476.400" rx="2.800" ry="4.600" transform="rotate(-10 988.600 476.400)"/><ellipse cx="988.300" cy="484.200" rx="2.300" ry="1.400"/>
  </g>
  <!-- select -->
  <path d="M978.600 500.600 V518.200 L982.600 514.400 L985.600 521 L988.400 519.800 L985.500 513.400 H991 Z" fill="#c2c6d2" fill-opacity=".8" stroke="#9399b4" stroke-width="1"/>
</svg>
</div>
<span class="t" style="left:543.59px;top:339.30px;font-size:16.81px;line-height:21px;transform:scaleX(1.0097);color:#fff">14,682 m</span>
<span class="t" style="left:545.00px;top:363.50px;font-size:11.01px;line-height:14px;transform:scaleX(0.7000);color:#fff">X</span>
<span class="t" style="left:544.80px;top:382.40px;font-size:10.87px;line-height:14px;transform:scaleX(0.8857);color:#fff">Y</span>
<span class="t" style="left:545.00px;top:401.30px;font-size:11.30px;line-height:14px;transform:scaleX(0.8000);color:#fff">Z</span>
<span class="t" style="left:561.00px;top:363.50px;font-size:11.01px;line-height:14px;transform:scaleX(1.0290);color:#ff3a3a">-0,858 m</span>
<span class="t" style="left:561.00px;top:382.40px;font-size:10.87px;line-height:14px;transform:scaleX(1.0395);color:#30cc30">-7,959 m</span>
<span class="t" style="left:561.90px;top:401.30px;font-size:11.30px;line-height:14px;transform:scaleX(0.9895);color:#2a2aff">12,308 m</span>
<!-- red annotations -->
<span class="t" style="left:341.16px;top:194.00px;font-size:22.03px;line-height:27px;transform:scaleX(0.6364);color:#f21d1d;text-shadow:0 0 3px rgba(60,60,120,.45)">1</span>
<span class="t" style="left:338.49px;top:234.80px;font-size:24.35px;line-height:30px;transform:scaleX(1.0083);color:#f21d1d;text-shadow:0 0 3px rgba(60,60,120,.45)">2</span>
<span class="t" style="left:339.50px;top:276.00px;font-size:24.64px;line-height:30px;transform:scaleX(0.9308);color:#f21d1d;text-shadow:0 0 3px rgba(60,60,120,.45)">3</span>
<!-- ===== status bar ===== -->
<svg style="left:0;top:699px" width="1024" height="28" viewBox="0 699 1024 28">
  <g fill="#b4b4b4" stroke="#9a9a9a" stroke-width="1">
    <path d="M743 707.500 L736.500 713.700 L743 720 Z"/><rect x="745" y="707.500" width="2" height="12.500"/><rect x="748.500" y="707.500" width="2" height="12.500"/>
    <path d="M763.500 707.500 L756.500 713.700 L763.500 720 Z"/>
    <path d="M821.500 707.500 L828.500 713.700 L821.500 720 Z"/>
    <rect x="834.500" y="707.500" width="2" height="12.500"/><rect x="838" y="707.500" width="2" height="12.500"/><path d="M842.500 707.500 L849 713.700 L842.500 720 Z"/>
  </g>
  <!-- sheet browser -->
  <rect x="851.500" y="707.500" width="13.500" height="12.500" fill="#f4f6fa" stroke="#4a5566" stroke-width="1"/>
  <rect x="852" y="708" width="12.500" height="2.200" fill="#5a6a84"/>
  <g fill="#7a879c"><rect x="853.500" y="712" width="2" height="1.600"/><rect x="853.500" y="714.800" width="2" height="1.600"/><rect x="853.500" y="717.400" width="2" height="1.600"/></g>
  <g stroke="#8a94a6" stroke-width=".9"><path d="M857 712.800 H863.500 M857 715.600 H863.500 M857 718.200 H863.500"/></g>
  <rect x="873.500" y="705" width="1" height="16.500" fill="#5c5c5c"/><rect x="874.500" y="705" width="1" height="16.500" fill="#e4e4e4"/>
  <!-- pencil -->
  <rect x="888" y="706.600" width="2.400" height="3.600" fill="#d03030" stroke="#5a1a1a" stroke-width=".6"/>
  <rect x="890.400" y="706.600" width="6" height="3.600" fill="#e8e8e8" stroke="#333" stroke-width=".6"/>
  <polygon points="896.400,706.400 900.400,708.400 896.400,710.400" fill="#e8d020" stroke="#555" stroke-width=".5"/>
  <rect x="887.500" y="713.500" width="26" height="6" fill="#0000f0" stroke="#222" stroke-width="1"/>
  <!-- disk -->
  <path d="M919.500 708 V713.500 Q922.500 715.500 925.500 713.500 V708" fill="#c8c8c8" stroke="#222" stroke-width=".9"/>
  <ellipse cx="922.500" cy="708" rx="3" ry="1.400" fill="#e4e4e4" stroke="#222" stroke-width=".9"/>
  <rect x="918.500" y="713.500" width="27" height="6" fill="#e6e6e6" stroke="#222" stroke-width="1"/>
  <rect x="919" y="714" width="13" height="5" fill="#0000f0"/>
  <!-- web -->
  <g stroke="#222" stroke-width=".9" fill="none"><path d="M957 708.500 L957 711.800 M953 711.800 L957 709.500 L961 711.800"/></g>
  <g fill="#222"><rect x="951.600" y="705.400" width="2.600" height="2"/><rect x="955.700" y="705.400" width="2.600" height="2"/><rect x="959.800" y="705.400" width="2.600" height="2"/><rect x="951.600" y="710.400" width="2.200" height="2"/><rect x="960.200" y="710.400" width="2.200" height="2"/><rect x="956" y="711.200" width="2" height="1.800"/></g>
  <rect x="950.500" y="713.500" width="26.500" height="6" fill="#e6e6e6" stroke="#222" stroke-width="1"/>
</svg>
<span class="t" style="left:12.50px;top:708.20px;font-size:10.29px;line-height:13px;transform:scaleX(0.9653);color:#111">To zoom, press + or – then press and hold Enter.</span>
<span class="t" style="left:780.30px;top:704.60px;font-size:10.87px;line-height:14px;transform:scaleX(0.9104);color:#111">1 of 1</span>
<span class="t" style="left:983.50px;top:708.30px;font-size:9.28px;line-height:12px;transform:scaleX(0.8942);color:#1c1c1c">3102 MB</span>
<div id="frameL" class="abs"></div>
<div id="frameT" class="abs"></div>
<div id="frameR" class="abs"></div>
<div id="frameB" class="abs"></div>
</body>
</html>
